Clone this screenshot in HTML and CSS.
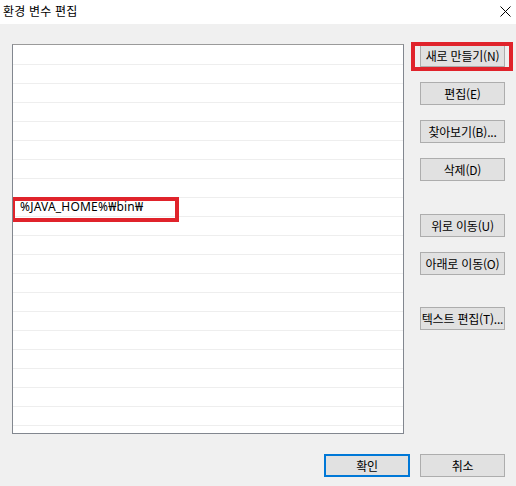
FILE: index.html
```html
<!DOCTYPE html>
<html lang="ko">
<head>
<meta charset="utf-8">
<link rel="stylesheet" href="styles.css">
</head>
<body>
<div class="titlebar">
  <span class="title">환경 변수 편집</span>
  <svg class="close" width="11" height="11" viewBox="0 0 11 11"><path d="M0.5 0.5 L10.5 10.5 M10.5 0.5 L0.5 10.5" stroke="#000" stroke-width="1" fill="none"/></svg>
</div>
<div class="content">
  <div class="main">
    <div class="list">
      <div class="row"></div>
      <div class="row"></div>
      <div class="row"></div>
      <div class="row"></div>
      <div class="row"></div>
      <div class="row"></div>
      <div class="row"></div>
      <div class="row"></div>
      <div class="row marked"><span class="rowtext">%JAVA_HOME%₩bin₩</span><span class="mark mark-row"></span></div>
      <div class="row"></div>
      <div class="row"></div>
      <div class="row"></div>
      <div class="row"></div>
      <div class="row"></div>
      <div class="row"></div>
      <div class="row"></div>
      <div class="row"></div>
      <div class="row"></div>
      <div class="row"></div>
      <div class="row"></div>
    </div>
    <div class="buttons">
      <div class="btnwrap"><button class="btn">새로 만들기(N)</button><span class="mark mark-btn"></span></div>
      <button class="btn">편집(E)</button>
      <button class="btn">찾아보기(B)...</button>
      <button class="btn">삭제(D)</button>
      <button class="btn gap-a">위로 이동(U)</button>
      <button class="btn">아래로 이동(O)</button>
      <button class="btn gap-b">텍스트 편집(T)...</button>
    </div>
  </div>
  <div class="footer">
    <button class="btn primary">확인</button>
    <button class="btn">취소</button>
  </div>
</div>
</body>
</html>
```
FILE: styles.css
```css
* { box-sizing: border-box; }
html, body {
  margin: 0;
  padding: 0;
  width: 516px;
  height: 486px;
  overflow: hidden;
}
body {
  background: #f0f0f0;
  font-family: "Noto Sans CJK KR", "Noto Sans", sans-serif;
  font-size: 12px;
  color: #000;
}
.titlebar {
  height: 24px;
  background: #fff;
  display: flex;
  align-items: center;
  justify-content: space-between;
  padding: 0 5px 2px 3px;
}
.title {
  font-size: 12px;
  line-height: 16px;
  letter-spacing: 0.2px;
}
.close {
  display: block;
  margin-top: 1px;
}
.content {
  padding: 20px 11px 0 12px;
}
.main {
  display: flex;
  gap: 16px;
}
.list {
  width: 392px;
  height: 390px;
  background: #fff;
  border: 1px solid #82878f;
  border-top-color: #9a9a9a;
  padding-top: 1px;
  overflow: hidden;
}
.row {
  height: 19px;
  border-bottom: 1px solid #eeeeee;
  position: relative;
  display: flex;
  align-items: center;
  padding-left: 7px;
}
.rowtext {
  font-family: "Noto Sans", "Noto Sans CJK KR", sans-serif;
  font-size: 12px;
  line-height: 18px;
  letter-spacing: 0.2px;
}
.mark {
  position: absolute;
  border: 4px solid #e0232b;
  pointer-events: none;
}
.mark-row {
  left: -2px;
  top: -1px;
  width: 168px;
  height: 25px;
}
.buttons {
  width: 85px;
  display: flex;
  flex-direction: column;
  gap: 15px;
}
.btnwrap {
  position: relative;
}
.mark-btn {
  left: -9px;
  right: -8px;
  top: -2px;
  bottom: -4px;
}
.btn {
  display: block;
  width: 85px;
  height: 23px;
  margin: 0;
  padding: 0;
  background: #e1e1e1;
  border: 1px solid #adadad;
  font-family: "Noto Sans CJK KR", "Noto Sans", sans-serif;
  font-size: 12px;
  color: #000;
  line-height: 20px;
  white-space: nowrap;
  text-align: center;
  letter-spacing: -0.2px;
}
.gap-a { margin-top: 18px; }
.gap-b { margin-top: 17px; }
.footer {
  margin-top: 20px;
  display: flex;
  justify-content: flex-end;
  gap: 10px;
}
.primary {
  width: 86px;
  border: 2px solid #0078d7;
}
```
